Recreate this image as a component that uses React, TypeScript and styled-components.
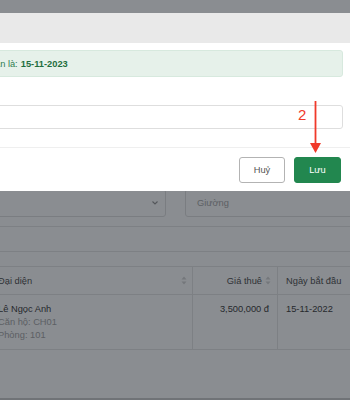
import styled, { createGlobalStyle } from 'styled-components';

const GlobalStyle = createGlobalStyle`
  html, body {
    margin: 0;
    padding: 0;
    background: #ffffff;
  }
  body {
    font-family: "Liberation Sans", Arial, Helvetica, sans-serif;
    font-size: 9.3px;
  }
  * {
    box-sizing: border-box;
  }
`;

const Screen = styled.div`
  position: relative;
  width: 350px;
  height: 400px;
  overflow: hidden;
  background: #ffffff;
`;

const Page = styled.div`
  display: flex;
  flex-direction: column;
  width: 600px;
  height: 400px;
  margin-left: -10px;
  padding-top: 189px;
`;

const Filters = styled.div`
  display: flex;
  gap: 19px;
`;

const SelectBox = styled.div<{ $width: number }>`
  display: flex;
  align-items: center;
  justify-content: space-between;
  width: ${(p) => p.$width}px;
  height: 28px;
  padding: 0 6px 0 11px;
  border: 1px solid #e1e1e1;
  border-radius: 3px;
  color: #aaaaaa;
`;

const Toolbar = styled.div`
  height: 26px;
  margin-top: 9px;
  border-top: 1px solid #e6e6e6;
  border-bottom: 1px solid #e6e6e6;
`;

const Table = styled.div`
  display: grid;
  grid-template-columns: 203px 85px 120px;
  margin-top: 14px;
  border-top: 1px solid #e6e6e6;
`;

const HeadCell = styled.div<{ $right?: boolean }>`
  display: flex;
  align-items: center;
  justify-content: ${(p) => (p.$right ? 'flex-end' : 'space-between')};
  gap: 3px;
  height: 28px;
  padding: 0 ${(p) => (p.$right ? '6px' : '5px')} 0 8px;
  border-bottom: 1px solid #e6e6e6;
  border-right: 1px solid #e6e6e6;
  color: #555555;
`;

const Cell = styled.div<{ $right?: boolean }>`
  display: flex;
  flex-direction: column;
  align-items: ${(p) => (p.$right ? 'flex-end' : 'flex-start')};
  gap: 3px;
  height: 55px;
  padding: 9px 8px 0 8px;
  border-bottom: 1px solid #e6e6e6;
  border-right: 1px solid #e6e6e6;
  color: #444444;
`;

const SubText = styled.span`
  color: #aaaaaa;
`;

const Spacer = styled.div`
  flex: 1;
`;

const BottomEdge = styled.div`
  height: 2px;
  background: #cfcfcf;
`;

const Overlay = styled.div`
  position: absolute;
  inset: 0;
  background: rgba(6, 12, 21, 0.47);
`;

const Modal = styled.div`
  position: absolute;
  top: 13px;
  left: -79px;
  width: 438px;
  background: #ffffff;
  border-radius: 4px;
  overflow: hidden;
`;

const ModalHeader = styled.div`
  height: 30px;
  background: #e9e9e9;
`;

const ModalBody = styled.div`
  padding: 7px 16px 18px;
`;

const Alert = styled.div`
  display: flex;
  align-items: center;
  height: 27px;
  padding: 0 12px;
  border: 1px solid #d7e9de;
  border-radius: 3px;
  background: #e6f1ea;
  color: #2f7d4f;
  font-size: 9.3px;

  b {
    color: #1f6e40;
    margin-left: 3px;
  }
`;

const Input = styled.div`
  height: 24px;
  margin-top: 28px;
  border: 1px solid #dedede;
  border-radius: 3px;
`;

const ModalFooter = styled.div`
  display: flex;
  justify-content: flex-end;
  gap: 9px;
  padding: 9px 18px 8px;
  border-top: 1px solid #efefef;
`;

const Button = styled.button<{ $primary?: boolean }>`
  width: ${(p) => (p.$primary ? 47 : 46)}px;
  height: 26px;
  padding: 0;
  border-radius: 3px;
  border: 1px solid ${(p) => (p.$primary ? '#22874f' : '#b3b3b3')};
  background: ${(p) => (p.$primary ? '#22874f' : '#ffffff')};
  color: ${(p) => (p.$primary ? '#ffffff' : '#555555')};
  font-family: inherit;
  font-size: 9.3px;
`;

const StepNumber = styled.span`
  position: absolute;
  left: 298px;
  top: 106px;
  color: #f0392a;
  font-size: 15px;
  line-height: 18px;
`;

const Arrow = styled.svg`
  position: absolute;
  left: 305px;
  top: 100px;
`;

const SortIcon = () => (
  <svg width="6" height="9" viewBox="0 0 6 9">
    <path d="M3 0.5 L5.5 3.5 H0.5 Z" fill="#d6d6d6" />
    <path d="M3 8.5 L5.5 5.5 H0.5 Z" fill="#d6d6d6" />
  </svg>
);

const Chevron = () => (
  <svg width="8" height="6" viewBox="0 0 8 6">
    <path d="M1.5 1.5 L4 4 L6.5 1.5" fill="none" stroke="#9a9a9a" strokeWidth="1.1" />
  </svg>
);

export default function App() {
  return (
    <Screen>
      <GlobalStyle />
      <Page>
        <Filters>
          <SelectBox $width={176}>
            <span />
            <Chevron />
          </SelectBox>
          <SelectBox $width={220}>
            <span>Giường</span>
          </SelectBox>
        </Filters>
        <Toolbar />
        <Table>
          <HeadCell>
            <span>Đại diện</span>
            <SortIcon />
          </HeadCell>
          <HeadCell $right>
            <span>Giá thuê</span>
            <SortIcon />
          </HeadCell>
          <HeadCell>
            <span>Ngày bắt đầu</span>
          </HeadCell>
          <Cell>
            <span>Lê Ngọc Anh</span>
            <SubText>Căn hộ: CH01</SubText>
            <SubText>Phòng: 101</SubText>
          </Cell>
          <Cell $right>
            <span>3,500,000 đ</span>
          </Cell>
          <Cell>
            <span>15-11-2022</span>
          </Cell>
        </Table>
        <Spacer />
        <BottomEdge />
      </Page>
      <Overlay />
      <Modal>
        <ModalHeader />
        <ModalBody>
          <Alert>
            Ngày hết hạn là: <b>15-11-2023</b>
          </Alert>
          <Input />
        </ModalBody>
        <ModalFooter>
          <Button>Huỷ</Button>
          <Button $primary>Lưu</Button>
        </ModalFooter>
      </Modal>
      <StepNumber>2</StepNumber>
      <Arrow width="22" height="56" viewBox="0 0 22 56">
        <line x1="10.5" y1="1" x2="10.5" y2="45" stroke="#f0392a" strokeWidth="1.8" />
        <path d="M5 43 H16 L10.5 53 Z" fill="#f0392a" />
      </Arrow>
    </Screen>
  );
}
